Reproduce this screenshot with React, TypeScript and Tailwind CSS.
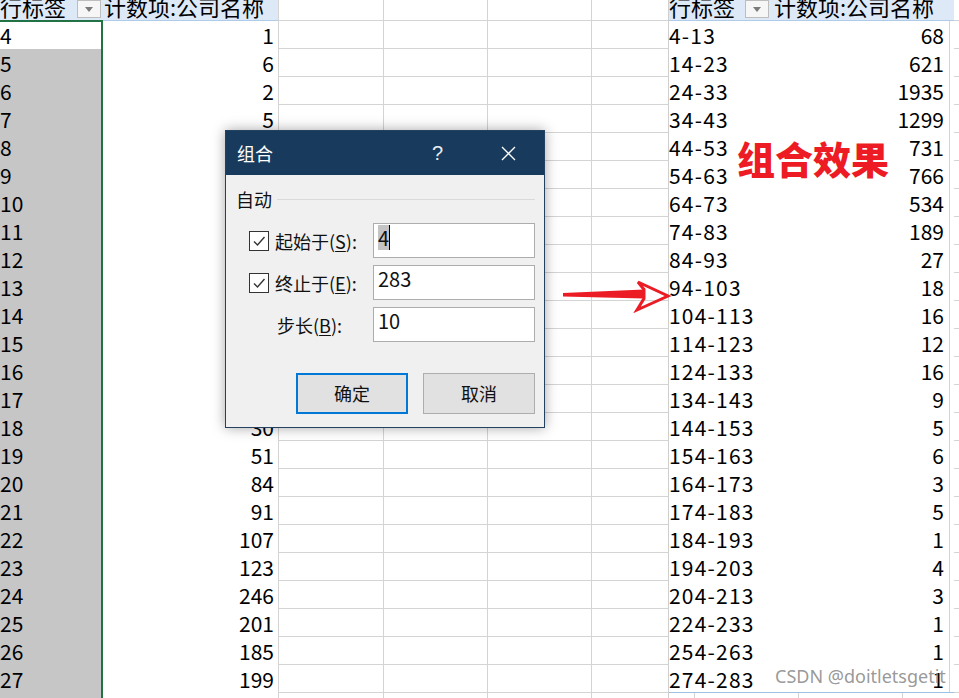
import React from "react";

const leftVals = [
  "1", "6", "2", "5", "3", "8", "4", "9", "7", "12", "15", "22", "18", "26",
  "30", "51", "84", "91", "107", "123", "246", "201", "185", "199", "210",
];

const rightRows: [string, string][] = [
  ["4-13", "68"], ["14-23", "621"], ["24-33", "1935"], ["34-43", "1299"],
  ["44-53", "731"], ["54-63", "766"], ["64-73", "534"], ["74-83", "189"],
  ["84-93", "27"], ["94-103", "18"], ["104-113", "16"], ["114-123", "12"],
  ["124-133", "16"], ["134-143", "9"], ["144-153", "5"], ["154-163", "6"],
  ["164-173", "3"], ["174-183", "5"], ["184-193", "1"], ["194-203", "4"],
  ["204-213", "3"], ["224-233", "1"], ["254-263", "1"], ["274-283", "1"],
];

function Dropdown() {
  return (
    <div className="w-[24px] h-[18px] bg-[#f6f6f6] border border-[#bdbdbd] flex items-center justify-center">
      <div className="w-0 h-0 border-l-[4px] border-r-[4px] border-t-[5px] border-l-transparent border-r-transparent border-t-[#7a7a7a]" />
    </div>
  );
}

function Check() {
  return (
    <div className="w-[20px] h-[20px] bg-white border border-[#333] flex items-center justify-center">
      <svg width="14" height="14" viewBox="0 0 14 14">
        <polyline points="2,7.5 5.5,11 12.5,3" fill="none" stroke="#333" strokeWidth="1.4" />
      </svg>
    </div>
  );
}

export default function App() {
  const bodyRows = Array.from({ length: 25 }, (_, i) => i);
  return (
    <div className="relative w-[959px] h-[698px] overflow-hidden bg-white text-black font-['Noto_Sans_CJK_SC',sans-serif]">
      <div className="flex -mt-[8px]">
        {/* Column A */}
        <div className="w-[103px] flex flex-col shrink-0">
          <div className="h-[28px] bg-[#dde9f6] flex items-start relative">
            <span className="text-[22px] leading-[28px] whitespace-nowrap">行标签</span>
            <div className="ml-auto mt-[8px] mr-[2px]">
              <Dropdown />
            </div>
          </div>
          <div className="h-[29px] border-t-2 border-r-2 border-[#217346] bg-white text-[21px] leading-[27px]">
            4
          </div>
          {bodyRows.slice(1).map((i) => (
            <div key={i} className="h-[28px] border-r-2 border-[#217346] bg-[#c6c6c6] text-[21px] leading-[28px]">
              {i + 4}
            </div>
          ))}
        </div>
        {/* Column B */}
        <div className="w-[176px] flex flex-col shrink-0 border-r border-[#d4d4d4]">
          <div className="h-[29px] bg-[#dde9f6] border-b border-[#aecbe9] text-[22px] leading-[28px] pl-[1px] whitespace-nowrap">
            计数项:公司名称
          </div>
          {leftVals.map((v, i) => (
            <div key={i} className="h-[28px] text-right pr-[4px] text-[21px] leading-[28px]">
              {v}
            </div>
          ))}
        </div>
        {/* Middle grid */}
        <div className="w-[389px] flex flex-col shrink-0">
          {Array.from({ length: 26 }, (_, r) => (
            <div key={r} className={`flex border-b border-[#d4d4d4] ${r === 0 ? "h-[29px]" : "h-[28px]"}`}>
              <div className="w-[105px] border-r border-[#d4d4d4]" />
              <div className="w-[104px] border-r border-[#d4d4d4]" />
              <div className="w-[104px] border-r border-[#d4d4d4]" />
              <div className="w-[76px]" />
            </div>
          ))}
        </div>
        {/* Right pivot */}
        <div className="w-[286px] flex flex-col shrink-0 border-l border-[#cfcfcf]">
          <div className="h-[29px] bg-[#dde9f6] border-b border-[#aecbe9] flex">
            <div className="w-[103px] flex items-start">
              <span className="text-[22px] leading-[28px] whitespace-nowrap">行标签</span>
              <div className="ml-auto mt-[8px] mr-[3px]">
                <Dropdown />
              </div>
            </div>
            <div className="pl-[2px] text-[22px] leading-[28px] whitespace-nowrap">计数项:公司名称</div>
          </div>
          {rightRows.map(([a, b], i) => (
            <div
              key={i}
              className={`flex h-[28px] text-[21px] leading-[28px] ${i === rightRows.length - 1 ? "border-b border-[#9bc2e6]" : ""}`}
            >
              <div className="w-[103px] whitespace-nowrap tracking-[1.2px]">{a}</div>
              <div className="w-[178px] text-right pr-[5px] border-r border-[#d4d4d4]">{b}</div>
              <div className="w-[4px]" />
            </div>
          ))}
          <div className="flex h-[28px] border-b border-[#d4d4d4]">
            <div className="w-[26px] border-r border-[#d4d4d4]" />
            <div className="w-[104px] border-r border-[#d4d4d4]" />
            <div className="w-[104px] border-r border-[#d4d4d4]" />
          </div>
        </div>
        {/* Right strip */}
        <div className="flex-1 flex flex-col">
          {Array.from({ length: 26 }, (_, r) => (
            <div key={r} className={`border-b border-[#d4d4d4] ${r === 0 ? "h-[29px]" : "h-[28px]"}`} />
          ))}
        </div>
      </div>

      {/* Dialog */}
      <div className="absolute left-[225px] top-[130px] w-[320px] h-[298px] border border-[#24425f] bg-[#f0f0f0] shadow-[0_0_12px_rgba(0,0,0,0.35)] flex flex-col">
        <div className="h-[44px] bg-[#183b5d] flex items-center text-white shrink-0">
          <span className="pl-[11px] text-[18px] leading-none">组合</span>
          <span className="ml-auto text-[20px] leading-none font-['Liberation_Sans',sans-serif] text-[#e8edf2]">?</span>
          <svg className="ml-[58px] mr-[28px]" width="15" height="15" viewBox="0 0 15 15">
            <path d="M1 1 L14 14 M14 1 L1 14" stroke="#ffffff" strokeWidth="1.3" />
          </svg>
        </div>
        <div className="flex flex-col flex-1 text-[#111]">
          <div className="flex items-center mt-[14px] pl-[10px] pr-[9px]">
            <span className="text-[18px] leading-[20px]">自动</span>
            <div className="flex-1 h-px bg-[#dadada] ml-[5px]" />
          </div>
          <div className="flex flex-col gap-[7px] mt-[14px]">
            <div className="flex items-center h-[35px]">
              <div className="w-[147px] flex items-center pl-[23px]">
                <Check />
                <span className="ml-[6px] text-[18px] leading-none whitespace-nowrap">
                  起始于(<span className="underline underline-offset-2">S</span>):
                </span>
              </div>
              <div className="w-[162px] h-[35px] bg-white border border-[#adadad] flex items-start pl-[4px] pt-[1px]">
                <span className="text-[20px] leading-[25px] bg-[#c4c4c4]">4</span>
                <span className="w-px h-[25px] bg-black" />
              </div>
            </div>
            <div className="flex items-center h-[35px]">
              <div className="w-[147px] flex items-center pl-[23px]">
                <Check />
                <span className="ml-[6px] text-[18px] leading-none whitespace-nowrap">
                  终止于(<span className="underline underline-offset-2">E</span>):
                </span>
              </div>
              <div className="w-[162px] h-[35px] bg-white border border-[#adadad] flex items-start pl-[4px]">
                <span className="text-[20px] leading-[25px]">283</span>
              </div>
            </div>
            <div className="flex items-center h-[35px]">
              <div className="w-[147px] flex items-center pl-[51px]">
                <span className="text-[18px] leading-none whitespace-nowrap">
                  步长(<span className="underline underline-offset-2">B</span>):
                </span>
              </div>
              <div className="w-[162px] h-[35px] bg-white border border-[#adadad] flex items-start pl-[4px]">
                <span className="text-[20px] leading-[25px]">10</span>
              </div>
            </div>
          </div>
          <div className="flex justify-end gap-[15px] pr-[9px] mt-[31px]">
            <div className="w-[112px] h-[41px] border-2 border-[#0078d7] bg-[#e1e1e1] flex items-center justify-center text-[18px]">
              确定
            </div>
            <div className="w-[112px] h-[41px] border border-[#adadad] bg-[#e1e1e1] flex items-center justify-center text-[18px]">
              取消
            </div>
          </div>
        </div>
      </div>

      {/* Red label */}
      <div className="absolute left-[737px] top-[139px] text-[38px] leading-[38px] font-black text-[#ed1c24] whitespace-nowrap">
        组合效果
      </div>

      {/* Arrow */}
      <svg className="absolute left-[558px] top-[276px]" width="114" height="40" viewBox="0 0 114 40">
        <polygon points="5,17 86,13.5 86,22.5 5,20.5" fill="#ec1c24" />
        <polygon points="86,13.5 80,6 110,20 79,34 86,22.5" fill="none" stroke="#ec1c24" strokeWidth="3" strokeLinejoin="miter" />
      </svg>

      {/* Watermark */}
      <div className="absolute left-[775px] top-[666px] text-[18px] leading-[20px] text-[#8c8c8c]/90 font-['Noto_Sans',sans-serif] whitespace-nowrap">
        CSDN @doitletsgetit
      </div>
    </div>
  );
}
